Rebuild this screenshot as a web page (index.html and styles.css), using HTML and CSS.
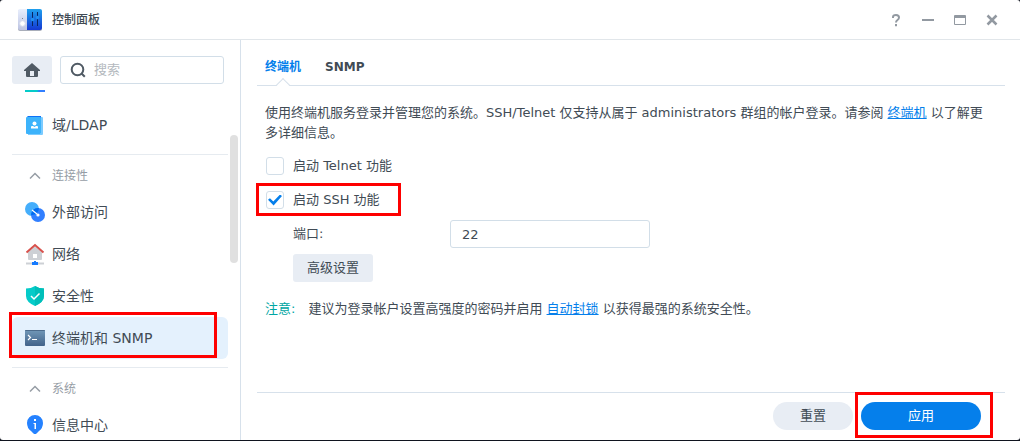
FILE: index.html
```html
<!DOCTYPE html>
<html lang="zh-CN">
<head>
  <meta charset="UTF-8" />
  <meta name="viewport" content="width=device-width, initial-scale=1.0"/>
  <title>控制面板</title>
  <link rel="stylesheet" href="styles.css">
</head>
<body>
  <div class="window">
    <header class="titlebar">
      <svg class="app-icon" width="24" height="24" viewBox="0 0 24 24">
        <defs>
          <linearGradient id="appBlue" x1="0" y1="0" x2="0" y2="1">
            <stop offset="0" stop-color="#1fa0ee"/><stop offset="1" stop-color="#1438d2"/>
          </linearGradient>
          <linearGradient id="appGrey" x1="0" y1="0" x2="0" y2="1">
            <stop offset="0" stop-color="#e9effd"/><stop offset="1" stop-color="#bcc3e2"/>
          </linearGradient>
        </defs>
        <rect y="2" width="24" height="21" rx="2" fill="#a9aeba"/>
        <path d="M2 1h7v21H2a2 2 0 0 1-2-2V3a2 2 0 0 1 2-2z" fill="url(#appGrey)"/>
        <path d="M9 1h13a2 2 0 0 1 2 2v17a2 2 0 0 1-2 2H9z" fill="url(#appBlue)"/>
        <circle cx="4.500" cy="15.500" r="2.800" fill="#fff" stroke="#d3daec"/>
        <rect x="4" y="10" width="1" height="1" fill="#7b8492"/>
        <path d="M14.500 4v14M19.500 4v14" stroke="#08245f"/>
        <circle cx="14.500" cy="11.500" r="1.700" fill="#218ff0"/>
        <circle cx="19.500" cy="9.500" r="1.700" fill="#218ff0"/>
      </svg>
      <h1>控制面板</h1>
      <div class="window-tools">
        <button aria-label="帮助"><svg width="16" height="16" viewBox="0 0 16 16"><path d="M5 6V5q0-2 3-2t3 2.500q0 1.500-1.500 2.500T8 10.500M8 12v2.200" fill="none" stroke="#9299a1" stroke-width="2"/></svg></button>
        <button aria-label="最小化"><svg width="16" height="16" viewBox="0 0 16 16"><path d="M2 8h12" stroke="#9299a1" stroke-width="2"/></svg></button>
        <button aria-label="最大化"><svg width="16" height="16" viewBox="0 0 16 16"><path d="M2 4q0-1 1-1h10q1 0 1 1v8q0 1-1 1H3q-1 0-1-1zM3 6v6h10V6z" fill="#9299a1" fill-rule="evenodd"/></svg></button>
        <button aria-label="关闭"><svg width="16" height="16" viewBox="0 0 16 16"><path d="M3.500 3.500l9 9m0-9l-9 9" stroke="#9299a1" stroke-width="2.500"/></svg></button>
      </div>
    </header>

    <div class="content">
      <aside class="sidebar">
        <div class="search-row">
          <button class="home" aria-label="主页"><svg width="16" height="16" viewBox="0 0 16 16"><path d="M8 1L0 8v1h2v5q0 1 1 1h10q1 0 1-1V9h2V8zM6 9h4v5H6z" fill="#505a64" fill-rule="evenodd"/></svg></button>
          <label class="search">
            <svg width="16" height="16" viewBox="0 0 16 16"><circle cx="7.500" cy="7.500" r="5.800" fill="none" stroke="#505a64" stroke-width="2"/><path d="M11.500 11.500l3.300 3.300" stroke="#505a64" stroke-width="2"/></svg>
            <input type="text" placeholder="搜索" aria-label="搜索">
          </label>
        </div>

        <nav class="menu">
          <div class="scrolled-item"></div>
          <a class="item" href="#">
            <svg width="20" height="20" viewBox="0 0 20 20"><path d="M3 1h13v2H2q0-2 1-2z" fill="#0e72f7"/><path d="M16 2h1q1 0 1 1v16q0 1-1 1H3v-1h13z" fill="#7bcbff"/><rect x="1" y="2" width="15" height="17" rx="1" fill="#3db3fb"/><circle cx="9.500" cy="8.500" r="2" fill="#fff"/><path d="M6 13.500V12q0-1 1-1h1l1.500 1 1.500-1h1q1 0 1 1v1.500z" fill="#fff"/></svg>
            域/LDAP
          </a>
          <button class="section">
            <svg width="20" height="20" viewBox="0 0 20 20"><path d="M5 12.500l5-5 5 5" fill="none" stroke="#969da5" stroke-width="1.500"/></svg>
            连接性
          </button>
          <a class="item" href="#">
            <svg width="20" height="20" viewBox="0 0 20 20"><circle cx="7" cy="7" r="7" fill="#45aefb"/><circle cx="13" cy="13" r="7" fill="#317fff"/><path d="M6.100 12A7 7 0 0 1 13.900 6.100 7 7 0 0 1 6.100 13z" fill="#006cf0"/><path d="M7 8l5 4" stroke="#fff" stroke-width="1.200"/><circle cx="13" cy="13" r="1.600" fill="#fff"/></svg>
            外部访问
          </a>
          <a class="item" href="#">
            <svg width="20" height="22" viewBox="0 0 20 22"><path d="M10 3L3 9v7q0 1 1 1h12q1 0 1-1V9z" fill="#cdd0d5"/><path d="M1.500 9.500L10 2l8.500 7.500" fill="none" stroke="#d8514c" stroke-width="2"/><rect x="8" y="11" width="4" height="4" fill="#fff"/><path d="M1 20.500h18" stroke="#cdd0d5" stroke-width="2"/><path d="M9 18h2v1h2v3H7v-3h2z" fill="#167bff"/></svg>
            网络
          </a>
          <a class="item" href="#">
            <svg width="20" height="20" viewBox="0 0 20 20"><path d="M10 0q4 2.500 9 2.500V10q0 6-9 10-9-4-9-10V2.500Q6 2.500 10 0z" fill="#05cbc9"/><path d="M10 0q4 2.500 9 2.500V10q0 6-9 10z" fill="#00bfb9"/><path d="M6 10l3 3 5.500-5.500" fill="none" stroke="#fff" stroke-width="1.500"/></svg>
            安全性
          </a>
          <a class="item selected marked mark-menu" href="#">
            <svg width="20" height="20" viewBox="0 0 20 20"><defs><linearGradient id="term" x1="0" y1="0" x2="0" y2="1"><stop offset="0" stop-color="#7198b8"/><stop offset="1" stop-color="#42638a"/></linearGradient></defs><rect y="2" width="20" height="16" rx="1" fill="url(#term)"/><path d="M1 2h18q1 0 1 1H0q0-1 1-1z" fill="#4c6b8b"/><path d="M3 7l2.500 2.500L3 12M7 11.500h5" fill="none" stroke="#fff" stroke-width="1.200"/></svg>
            终端机和 SNMP
          </a>
          <button class="section">
            <svg width="20" height="20" viewBox="0 0 20 20"><path d="M5 12.500l5-5 5 5" fill="none" stroke="#969da5" stroke-width="1.500"/></svg>
            系统
          </button>
          <a class="item" href="#">
            <svg width="20" height="20" viewBox="0 0 20 20"><path d="M10 0a8 8 0 0 1 8 8q0 5-4 8l-2.500 2.500q-1.500 1-3 0L6 16q-4-3-4-8a8 8 0 0 1 8-8z" fill="#2582ff"/><path d="M9 4h2v2H9zM8.500 8H11v6H9.500V9h-1z" fill="#fff"/></svg>
            信息中心
          </a>
        </nav>
        <div class="scrollbar"></div>
      </aside>

      <main class="panel">
        <nav class="tabs">
          <a class="active" href="#">终端机</a>
          <a href="#">SNMP</a>
        </nav>

        <form class="settings" id="terminal">
          <p>使用终端机服务登录并管理您的系统。SSH/Telnet 仅支持从属于 administrators 群组的帐户登录。请参阅 <a href="#">终端机</a> 以了解更多详细信息。</p>
          <div class="row">
            <label class="check"><input type="checkbox">启动 Telnet 功能</label>
          </div>
          <div class="row">
            <label class="check marked mark-ssh"><input type="checkbox" checked>启动 SSH 功能</label>
          </div>
          <div class="row indent">
            <label class="field-label" for="port">端口:</label>
            <input class="field" id="port" type="text" value="22">
          </div>
          <div class="row indent">
            <button class="btn" type="button">高级设置</button>
          </div>
          <p class="note"><span>注意:</span>建议为登录帐户设置高强度的密码并启用 <a href="#">自动封锁</a> 以获得最强的系统安全性。</p>
        </form>

        <footer class="actions">
          <button class="btn round" type="reset" form="terminal">重置</button>
          <div class="marked mark-apply">
            <button class="btn round primary" type="button">应用</button>
          </div>
        </footer>
      </main>
    </div>
  </div>
</body>
</html>
```
FILE: styles.css
```css
* {
  box-sizing: border-box;
}

body {
  margin: 0;
  padding-bottom: 1px;
  height: 100vh;
  background: #10141f;
  color: #414b55;
  font-family: "DejaVu Sans", "Noto Sans CJK SC", sans-serif;
  font-size: 13px;
  line-height: 20px;
}

button, input {
  font: inherit;
  color: inherit;
}

button {
  border: none;
  padding: 0;
  background: none;
  cursor: pointer;
}

svg {
  display: block;
  flex: none;
}

.window {
  display: flex;
  flex-direction: column;
  height: 100%;
  background: #fff;
  border-radius: 3px;
  overflow: hidden;
}

.titlebar {
  display: flex;
  align-items: center;
  flex: none;
  height: 40px;
  padding: 0 20px 0 18px;
  border-bottom: 1px solid #e1e6ea;
}

.titlebar h1 {
  margin: 0 auto 0 10px;
  font-size: 12px;
  font-weight: 500;
}

.window-tools {
  display: flex;
  gap: 16px;
}

.content {
  display: flex;
  flex: 1;
  min-height: 0;
}

/* Sidebar */
.sidebar {
  position: relative;
  display: flex;
  flex-direction: column;
  flex: none;
  width: 241px;
  padding: 16px 12px 0;
  border-right: 1px solid #d7e1eb;
}

.search-row {
  display: flex;
  flex: none;
  gap: 8px;
  margin-right: 4px;
  margin-bottom: 6px;
}

.home {
  display: grid;
  place-items: center;
  width: 40px;
  height: 28px;
  border-radius: 3px;
  background: #e8edf4;
}

.search {
  display: flex;
  align-items: center;
  gap: 8px;
  flex: 1;
  min-width: 0;
  height: 28px;
  padding: 0 9px;
  border: 1px solid #d2dee8;
  border-radius: 3px;
}

.search input {
  width: 100%;
  min-width: 0;
  padding: 0;
  border: none;
  outline: none;
}

.search input::placeholder {
  color: #b4b9be;
}

.menu {
  flex: 1;
  min-height: 0;
  margin: 0 -12px;
  padding: 0 12px;
  overflow: hidden;
}

.scrolled-item {
  width: 20px;
  height: 2px;
  margin: 0 13px 12px;
  background: linear-gradient(90deg, #05cbc9 60%, #317fff 70%);
}

.item, .section {
  display: flex;
  align-items: center;
  gap: 7px;
  width: 216px;
  padding: 0 13px;
}

.item {
  height: 42px;
  border-radius: 6px;
  color: #414b55;
  font-size: 14px;
  text-decoration: none;
}

.item.selected {
  background: #e4f1fd;
}

.section {
  height: 37px;
  margin-top: 8px;
  padding-top: 6px;
  border-top: 1px solid #e6ebf0;
  color: #969da5;
  font-size: 12px;
}

.scrollbar {
  position: absolute;
  top: 95px;
  right: 2px;
  width: 8px;
  height: 128px;
  border-radius: 4px;
  background: #e0e0e0;
}

/* Main panel */
.panel {
  display: flex;
  flex-direction: column;
  flex: 1;
  min-width: 0;
  padding: 17px 15px 0 16px;
}

.tabs {
  display: flex;
  gap: 24px;
  height: 29px;
  padding: 0 8px;
  border-bottom: 1px solid #d7e1eb;
}

.tabs a {
  position: relative;
  color: #414b55;
  font-size: 12px;
  font-weight: bold;
  text-decoration: none;
}

.tabs .active {
  color: #057feb;
}

.tabs .active::after {
  content: "";
  position: absolute;
  left: 50%;
  bottom: -5px;
  width: 9px;
  height: 9px;
  margin-left: -5px;
  border: 1px solid #d7e1eb;
  border-right: none;
  border-bottom: none;
  background: linear-gradient(135deg, #fff 50%, transparent 50%);
  transform: rotate(45deg);
}

.settings {
  flex: 1;
  padding: 17px 16px 0 8px;
}

.settings p {
  margin: 0 0 6px;
}

.settings a {
  color: #057feb;
}

.row {
  display: flex;
  align-items: center;
  height: 34px;
}

.indent {
  padding-left: 28px;
}

.check {
  display: flex;
  align-items: center;
  gap: 9px;
}

.check input {
  appearance: none;
  display: grid;
  place-items: center;
  width: 18px;
  height: 18px;
  margin: 0 0 0 1px;
  border: 1px solid #d2dee8;
  border-radius: 3px;
}

.check input:checked::after {
  content: "";
  width: 14px;
  height: 11px;
  background: #057feb;
  clip-path: polygon(0 48%, 14% 34%, 38% 64%, 86% 0, 100% 14%, 40% 100%);
}

.field-label {
  width: 157px;
}

.field {
  width: 200px;
  height: 28px;
  padding: 0 11px;
  border: 1px solid #d2dee8;
  border-radius: 3px;
}

.btn {
  width: 80px;
  height: 28px;
  border-radius: 3px;
  background: #e8edf4;
}

.round {
  border-radius: 14px;
}

.primary {
  display: block;
  width: 120px;
  background: #057feb;
  color: #fff;
}

.settings .note {
  margin-top: 14px;
}

.note span {
  margin-right: 13px;
  color: #00a6a3;
}

.actions {
  display: flex;
  justify-content: flex-end;
  align-items: flex-start;
  gap: 8px;
  flex: none;
  height: 48px;
  padding: 9px 24px 0;
  border-top: 1px solid #d7e1eb;
}

/* Red outlines over the steps to follow */
.marked {
  position: relative;
}

.marked::before {
  content: "";
  position: absolute;
  border: 3px solid #fe0000;
  pointer-events: none;
}

.mark-menu::before {
  inset: -5px 11px 1px -3px;
}

.mark-ssh::before {
  inset: -7px -21px -6px -9px;
}

.mark-apply::before {
  inset: -10px -12px -8px -6px;
}
```
